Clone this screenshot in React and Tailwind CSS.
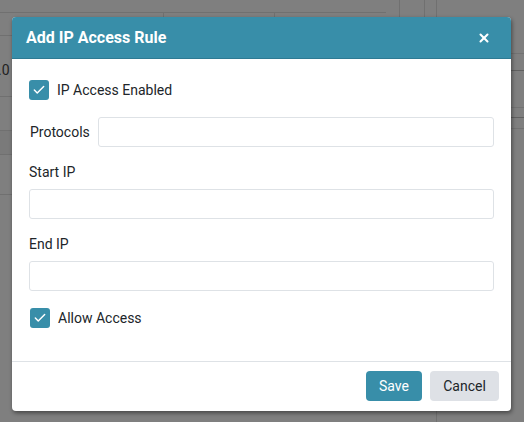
import { Check, X } from 'lucide-react'

const FONT = { fontFamily: 'Roboto, "Liberation Sans", sans-serif' }

function CheckBox({ label }) {
  return (
    <label className="flex items-center gap-2 h-5">
      <span className="w-5 h-5 rounded-[3px] bg-[#388ea9] flex items-center justify-center shrink-0">
        <Check className="w-[14px] h-[14px] text-white" strokeWidth={2.5} />
      </span>
      <span className="text-[14px] text-[#212529]">{label}</span>
    </label>
  )
}

function TextInput({ className = '' }) {
  return (
    <input
      type="text"
      className={`h-[30px] rounded-[3px] border border-[#dee2e6] bg-white outline-none ${className}`}
    />
  )
}

function Backdrop() {
  return (
    <div className="w-full h-full bg-[#7f7f7f] flex">
      <div className="w-[386px] flex flex-col">
        <div className="h-[13px] border-b border-[#707070]" />
        <div className="flex h-[23px] border-b border-[#707070]">
          <div className="w-[164px] border-r border-[#707070]" />
          <div className="w-[111px] border-r border-[#707070]" />
        </div>
        <div className="h-[61px] border-b border-[#707070] flex items-center pt-[8px] text-[14px] text-[#222] -ml-[2px]">.0</div>
        <div className="h-[34px] border-b border-[#707070]" />
        <div className="h-[24px] border-b border-[#707070] bg-[#7a7a7a]" />
        <div className="h-[40px] border-b border-[#707070]" />
      </div>
      <div className="flex-1 flex">
        <div className="w-[13px]" />
        <div className="w-[25px] border-l border-[#707070] h-[17px]" />
        <div className="w-[12px] border-l border-[#707070] h-[17px]" />
        <div className="flex-1 border-l border-[#707070] flex flex-col">
          <div className="h-[54px] border-b border-[#727272]" />
          <div className="h-[17px] border-b border-[#606060]" />
          <div className="h-[37px] border-b border-[#727272]" />
          <div className="h-[10px] border-b border-[#606060]" />
          <div className="h-[11px] border-b border-[#727272]" />
        </div>
      </div>
    </div>
  )
}

export default function App() {
  return (
    <div className="relative w-[524px] h-[422px] overflow-hidden" style={FONT}>
      <Backdrop />

      <div className="absolute left-[12px] top-[17px] w-[499px] bg-white rounded-[4px] shadow-[1px_2px_4px_rgba(0,0,0,0.45)] overflow-hidden">
        <div className="h-[42px] bg-[#388ea9] border-b border-[#2e7a93] flex items-center justify-between pl-[14px] pr-[20px]">
          <h2 className="text-white font-bold text-[16px]">Add IP Access Rule</h2>
          <X className="w-[14px] h-[14px] text-white" strokeWidth={3.5} />
        </div>

        <div className="px-[17px] pt-[21px] pb-[33px] flex flex-col">
          <CheckBox label="IP Access Enabled" />

          <div className="mt-[17px] flex items-center">
            <span className="text-[14px] text-[#212529] w-[69px] pl-[1px]">Protocols</span>
            <TextInput className="flex-1" />
          </div>

          <span className="mt-[15px] h-5 leading-5 text-[14px] text-[#212529]">Start IP</span>
          <TextInput className="mt-[7px] w-full" />

          <span className="mt-[15px] h-5 leading-5 text-[14px] text-[#212529]">End IP</span>
          <TextInput className="mt-[7px] w-full" />

          <div className="mt-[17px] pl-[1px]">
            <CheckBox label="Allow Access" />
          </div>
        </div>

        <div className="border-t border-[#dee2e6] flex justify-end gap-2 pt-[9px] pb-[10px] pr-[12px]">
          <button className="h-[30px] w-[56px] rounded-[4px] bg-[#388ea9] text-white text-[14px]">Save</button>
          <button className="h-[30px] w-[69px] rounded-[4px] bg-[#dee1e6] text-[#212529] text-[14px]">Cancel</button>
        </div>
      </div>
    </div>
  )
}
